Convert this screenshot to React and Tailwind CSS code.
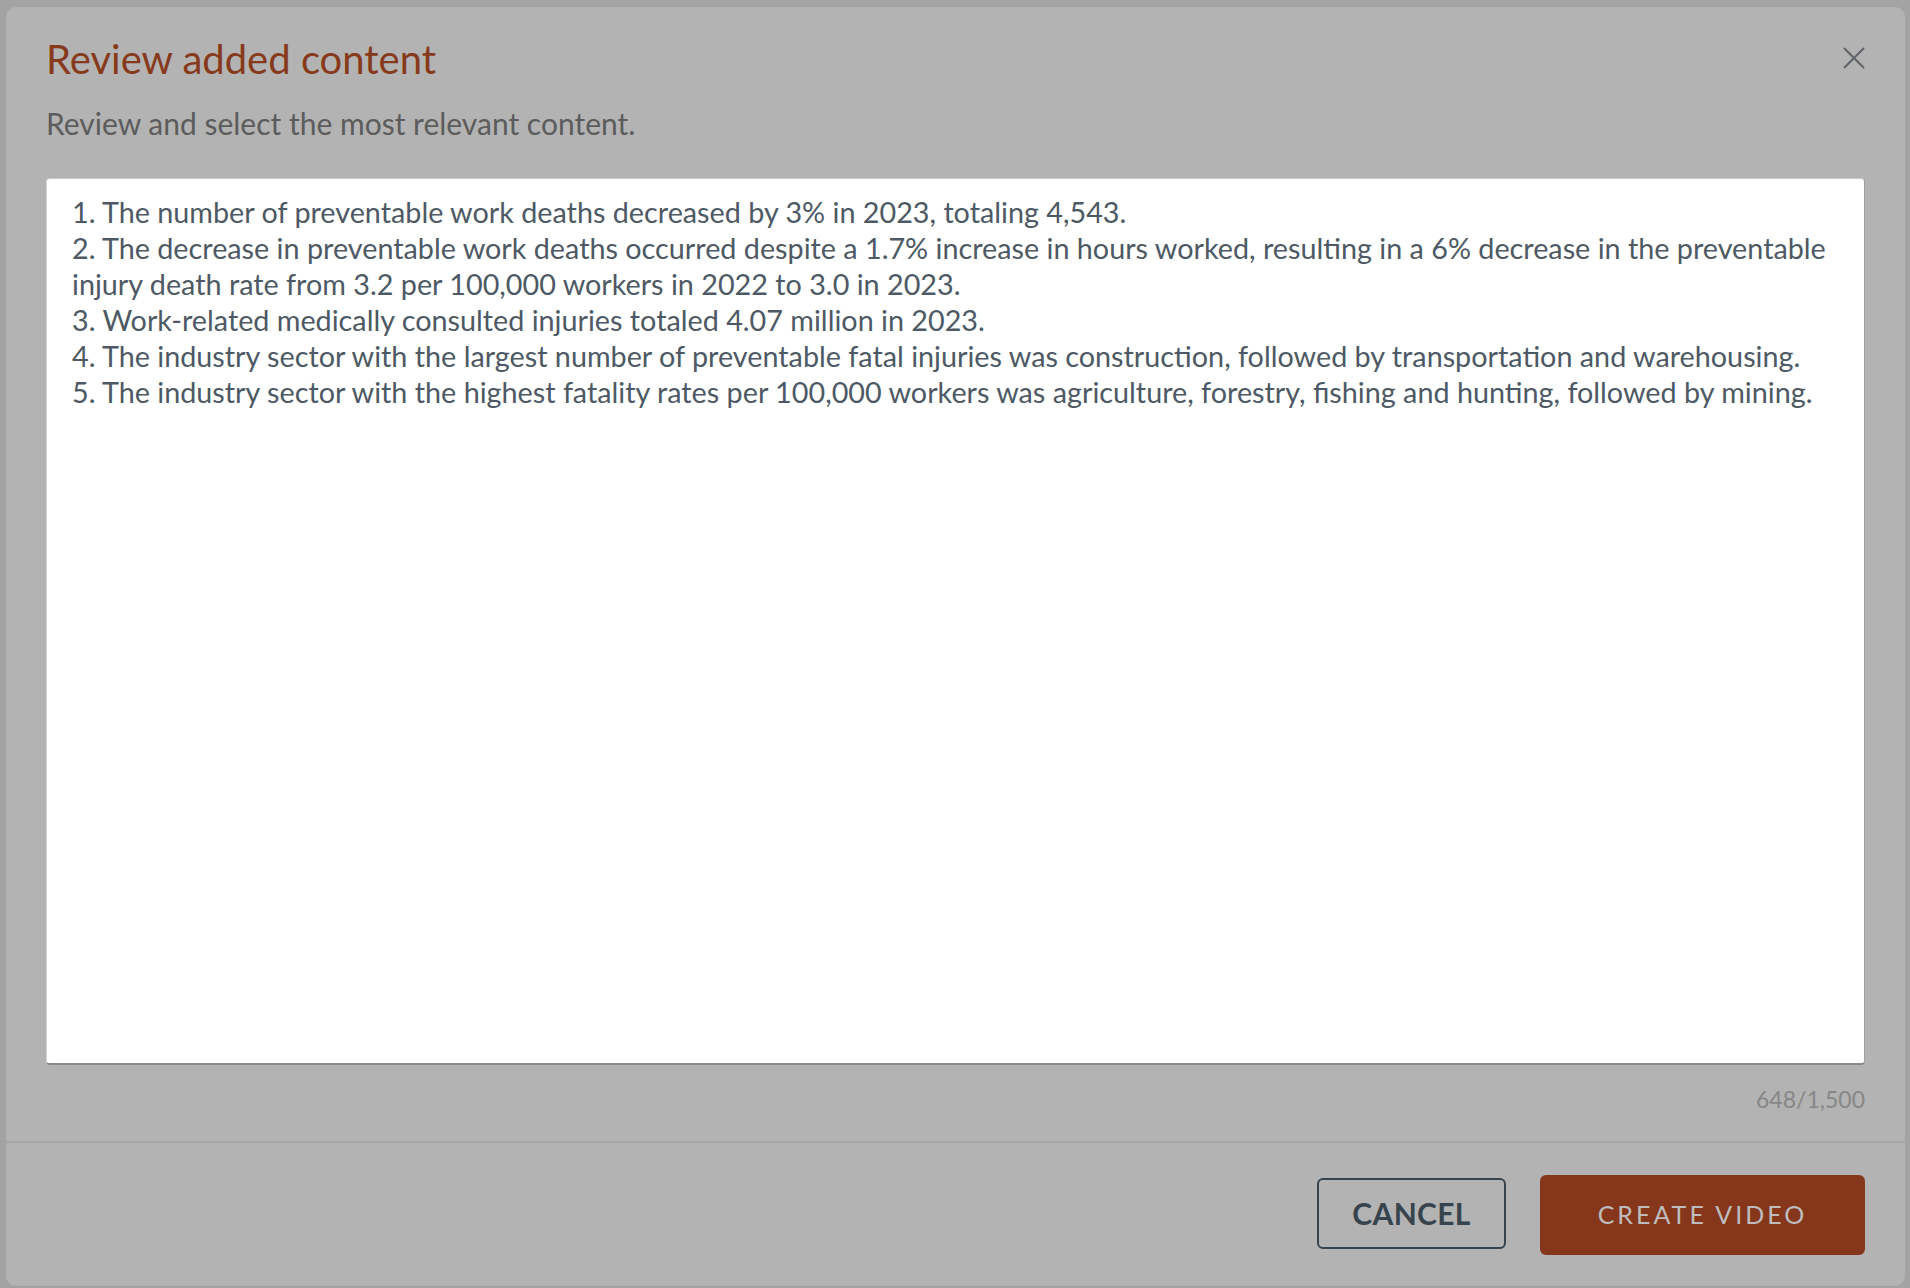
import React from "react";

const lines = [
  "1. The number of preventable work deaths decreased by 3% in 2023, totaling 4,543.",
  "2. The decrease in preventable work deaths occurred despite a 1.7% increase in hours worked, resulting in a 6% decrease in the preventable injury death rate from 3.2 per 100,000 workers in 2022 to 3.0 in 2023.",
  "3. Work-related medically consulted injuries totaled 4.07 million in 2023.",
  "4. The industry sector with the largest number of preventable fatal injuries was construction, followed by transportation and warehousing.",
  "5. The industry sector with the highest fatality rates per 100,000 workers was agriculture, forestry, fishing and hunting, followed by mining.",
];

export default function App() {
  return (
    <div
      className="w-full h-[1288px] bg-[#a3a3a3] pt-[7px] pl-[6px] pr-[5px] pb-[2px] flex"
      style={{ fontFamily: "Lato, 'Open Sans', sans-serif" }}
    >
      <div className="flex-1 flex flex-col bg-[#b3b3b3] rounded-[10px] overflow-hidden">
        <div className="relative px-10 pt-[28px]">
          <h1 className="text-[40px] leading-[48px] text-[#873a1b] font-normal">
            Review added content
          </h1>
          <p className="mt-[22px] text-[30px] leading-[36px] text-[#5c5c5c]">
            Review and select the most relevant content.
          </p>
          <button className="absolute right-10 top-[40px] w-[22px] h-[22px] text-[#5f6368]">
            <svg viewBox="0 0 22 22" className="w-[22px] h-[22px]" fill="none" stroke="currentColor" strokeWidth="2">
              <path d="M1 1L21 21M21 1L1 21" />
            </svg>
          </button>
        </div>
        <div className="px-10 mt-[37px]">
          <div className="h-[887px] bg-white rounded-[4px] border-t border-l border-t-[#c4c9ce] border-l-[#d0d4d8] border-r border-r-[#9ba0a5] border-b-2 border-b-[#858a8f] pl-[25px] pr-[20px] pt-[15px]">
            <div className="text-[28.75px] leading-[36px] text-[#4d5964] whitespace-pre-wrap">
              {lines.map((l, i) => (
                <div key={i}>{l}</div>
              ))}
            </div>
          </div>
          <div className="mt-[20px] text-right text-[23px] leading-[28px] text-[#878787]">
            648/1,500
          </div>
        </div>
        <div className="mt-[28px] h-[2px] bg-[#a7a7a7]" />
        <div className="flex-1 flex justify-end items-start gap-[34px] px-10 pt-[32px]">
          <button className="mt-[3px] w-[189px] h-[71px] rounded-[6px] border-2 border-[#37444d] text-[#37444d] text-[30px] font-bold tracking-[0.3px]">
            CANCEL
          </button>
          <button className="w-[325px] h-[80px] rounded-[6px] bg-[#86361a] text-[#bdbdbd] text-[25px] tracking-[3px]">
            CREATE VIDEO
          </button>
        </div>
      </div>
    </div>
  );
}
